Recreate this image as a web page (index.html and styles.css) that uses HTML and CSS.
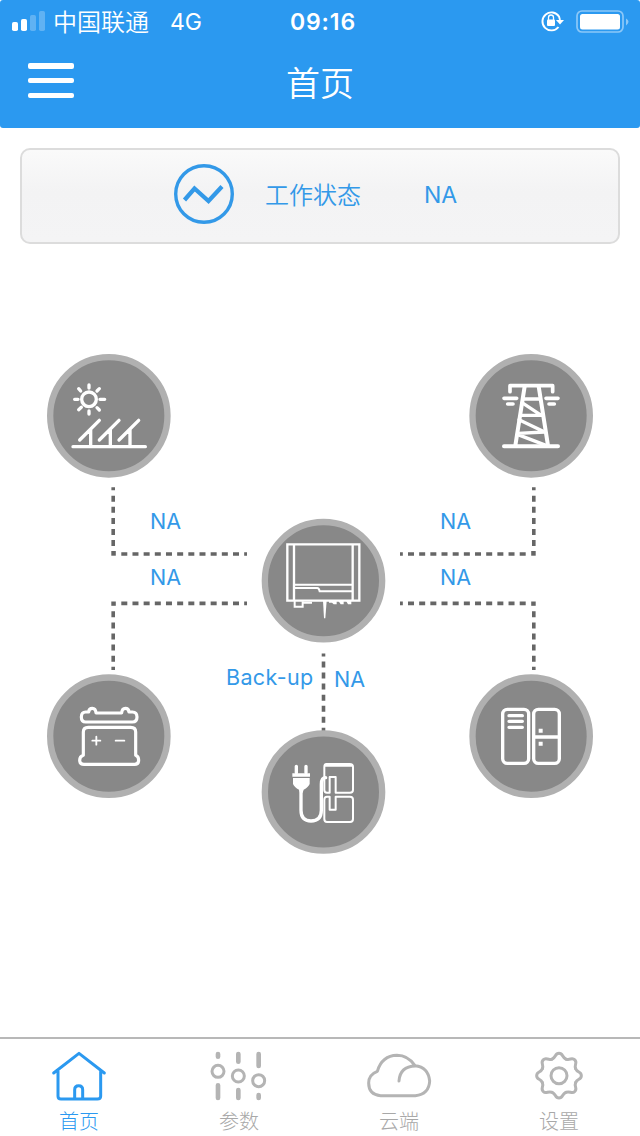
FILE: index.html
```html
<!DOCTYPE html>
<html lang="zh-CN">
<head>
<meta charset="utf-8">
<title>首页</title>
<link rel="stylesheet" href="styles.css">
</head>
<body>
<div class="app">
  <header class="header">
    <div class="statusbar">
      <div class="carrier">
        <svg class="signal" width="34" height="22" viewBox="0 0 34 22"><g fill="#fff"><rect x="0" y="12" width="6" height="9" rx="1.8"/><rect x="9" y="9" width="6" height="12" rx="1.8"/><g opacity=".25"><rect x="18" y="5" width="6" height="16" rx="1.8"/><rect x="27" y="1" width="6" height="20" rx="1.8"/></g></g></svg>
        <span class="carrier-name">中国联通</span><span class="network">4G</span>
      </div>
      <span class="clock">09:16</span>
      <div class="indicators">
        <svg class="lock" width="24" height="22" viewBox="0 0 24 22"><path d="M18.500 17A9 9 0 1 1 19 6.500L20 10" fill="none" stroke="#fff" stroke-width="1.900"/><path d="M16 10h8l-4 4.500z" fill="#fff"/><rect x="7" y="9.500" width="8" height="6.500" rx="1" fill="#fff"/><path d="M8.500 10V7.500a2.500 2.500 0 0 1 5 0V10" fill="none" stroke="#fff" stroke-width="1.300"/></svg>
        <svg class="power" width="54" height="24" viewBox="0 0 54 24"><rect x="1" y="1" width="46" height="21" rx="5" fill="none" stroke="#8cc8f8" stroke-width="1.700"/><rect x="4" y="4" width="40" height="15.500" rx="2.500" fill="#fff"/><path d="M50 8.500q5 3 0 7z" fill="#8cc8f8"/></svg>
      </div>
    </div>
    <div class="navbar">
      <div class="menu"><i></i><i></i><i></i></div>
      <h1 class="title">首页</h1>
    </div>
  </header>

  <section class="status-card">
    <svg width="60" height="60" viewBox="0 0 60 60" fill="none" stroke="#3399e8"><circle cx="30" cy="30" r="28.300" stroke-width="3.400"/><path d="M10.500 36 20.500 24.500 34.500 37 48 22.500" stroke-width="4.200"/></svg>
    <span class="status-label">工作状态</span>
    <span class="status-value">NA</span>
  </section>

  <main class="canvas">
    <svg class="wires" width="640" height="793" viewBox="0 244 640 793" fill="none" stroke="#666" stroke-width="3.600">
      <g id="wire-pair">
        <path d="M113.200 487.300v3M113.200 495.700V550" stroke-dasharray="6 5.100"/>
        <path d="M111.300 551h4.500v4.700h-4.500z" fill="#666" stroke="none"/>
        <path d="M121.300 554H247M121.300 603.400H247" stroke-dasharray="6 5.170"/>
        <path d="M111.300 601.500h4.500v4.300h-4.500z" fill="#666" stroke="none"/>
        <path d="M113.200 611.300V670" stroke-dasharray="6 5.100"/>
      </g>
      <use href="#wire-pair" transform="matrix(-1 0 0 1 647 0)"/>
      <path d="M323.500 653.500v3M323.500 661.500V732" stroke-dasharray="6 5.050"/>
    </svg>

    <span class="reading pv">NA</span>
    <span class="reading grid">NA</span>
    <span class="reading battery">NA</span>
    <span class="reading load">NA</span>
    <span class="reading backup-name">Back-up</span>
    <span class="reading backup">NA</span>

    <svg class="node node-pv" viewBox="0 0 420 420">
      <circle class="disc" cx="206.500" cy="212.500" r="176"/>
      <g class="line" stroke-width="10">
        <circle cx="147" cy="163" r="22"/>
        <path d="M147 120v9M147 198v9M104 163h10M180 163h14M116 131l6 7M178 131l-7 7M116 194l8-7M178 195l-7-7"/>
        <path d="M99 305h217M119 285l59-59M178 285l59-59M237 285l59-59M152 254v50M211 254v50M270 254v50"/>
      </g>
    </svg>

    <svg class="node node-grid" viewBox="0 0 420 420">
      <circle class="disc" cx="213.500" cy="212.500" r="176"/>
      <g class="line" stroke-width="11">
        <path d="M150 140v-18h128v18M132 160h38M258 160h36M143 177h16M267 177h16"/>
        <path d="M194 124 166 302M236 124l28 178M132 304h162" stroke-width="12"/>
        <path d="M191 162h49M186 173l58 38M182 211h64M177 224l77 37M174 265l80-4M172 268l86 33" stroke-width="10"/>
      </g>
    </svg>

    <svg class="node node-inverter" viewBox="0 0 420 420">
      <circle class="disc" cx="220.500" cy="212" r="176"/>
      <g class="line square" stroke-width="7">
        <path d="M112 103h216v169H112zM132 103v169M308 103v169"/>
        <path d="M134 224h174M134 234h68q5 0 7 10h99" stroke-width="6"/>
        <path d="M134 272v18h24v-16M160 278h26" stroke-width="6"/>
        <path d="M237 272h23v11h-9l-5-5h-9zM265 272h16v11h-9zM288 272h16v11h-10z" fill="#fff" stroke="none"/>
        <path d="M219 272h11l-4 53h-4z" fill="#fff" stroke="none"/>
      </g>
    </svg>

    <svg class="node node-battery" viewBox="0 0 420 420">
      <circle class="disc" cx="206.500" cy="213.500" r="176"/>
      <g class="line" stroke-width="9.500">
        <path d="M137 171q-13 0-13-15t13-15h9q1-11 11-11t11 14h77q1-14 11-14t11 11h10q14 0 14 15t-14 15z"/>
        <path d="M130 271V201q0-14 15-14h127q15 0 15 14v70q9 3 9 15 0 12-12 12H132q-13 0-13-12 0-12 11-15z"/>
        <path d="M157 227h24M169 215v24M227 227h26" stroke-width="5.500"/>
      </g>
    </svg>

    <svg class="node node-load" viewBox="0 0 420 420">
      <circle class="disc" cx="213.500" cy="213.500" r="176"/>
      <g class="line" stroke-width="10">
        <rect x="128" y="133" width="78" height="162" rx="14"/><rect x="221" y="133" width="77" height="162" rx="14"/>
        <path d="M222 216h75M147 152h40M147 169h40M147 187h40"/>
        <path d="M236 191h12v12h-12zM236 230h12v12h-12z" fill="#fff" stroke="none"/>
      </g>
    </svg>

    <svg class="node node-backup" viewBox="0 0 420 420">
      <circle class="disc" cx="220.500" cy="213" r="176"/>
      <g class="line">
        <path d="M139 136v19M168 136v19" stroke-width="10"/>
        <path d="M127 157h53v10h-53zM129 171h50v18q-4 10-18 17l-3 9h-8l-3-9q-14-7-18-17z" fill="#fff" stroke="none"/>
        <path d="M153 205v63q0 32 30 32 31 0 31-32v-78q0-20 13-20" stroke-width="10"/>
        <path d="M229 129h70q10 0 10 9v69q0 8-9 8h-43v-47h-18v47h-8q-8 0-8-8v-69q0-9 6-9zM257 227h43q9 0 9 9v58q0 9-9 9h-69q-8 0-8-9v-58q0-9 8-9h8v39h18zM225 134h82" stroke-width="6"/>
      </g>
    </svg>
  </main>

  <nav class="tabbar">
    <a class="tab active">
      <svg width="60" height="54" viewBox="0 0 180 162"><path d="M14 92 90 33l76 59M27 87v75q0 8 9 8h109q10 0 10-8V87" transform="translate(0 -14)"/><path d="M77 154v-26q0-12 12-12t12 12v26"/></svg>
      <span>首页</span>
    </a>
    <a class="tab">
      <svg width="60" height="54" viewBox="0 0 180 162"><path d="M27 21v8M27 115v38M88 21v23M88 129v24M149 21v36M149 144v9" stroke-width="14"/><g stroke-width="9"><circle cx="27" cy="73" r="18"/><circle cx="88" cy="87" r="18"/><circle cx="149" cy="101" r="18"/></g></svg>
      <span>参数</span>
    </a>
    <a class="tab">
      <svg width="70" height="54" viewBox="0 0 210 162"><path d="M50 146q-36-3-36-38 0-25 26-35 14-47 59-48 33 0 54 31 40 4 44 46-2 40-43 44zM154 57q-46 1-49 45"/></svg>
      <span>云端</span>
    </a>
    <a class="tab">
      <svg width="60" height="54" viewBox="0 0 180 162"><g transform="translate(90 86)"><circle r="24"/><g id="gear-half"><g id="gear-quarter"><path id="tooth" d="M-20.700-49.900C-8-55-13-67 0-67S8-55 20.700-49.900"/><use href="#tooth" transform="rotate(45)"/></g><use href="#gear-quarter" transform="rotate(90)"/></g><use href="#gear-half" transform="rotate(180)"/></g></svg>
      <span>设置</span>
    </a>
  </nav>
</div>
</body>
</html>
```
FILE: styles.css
```css
* { box-sizing: border-box; }
body { margin: 0; background: #fff; font-family: Inter, "Noto Sans CJK SC", sans-serif; }
.app { width: 640px; height: 1136px; display: flex; flex-direction: column; overflow: hidden; background: #fff; }

.header { height: 128px; flex: none; background: #2b99f0; color: #fff; border-radius: 3px; }
.statusbar { height: 40px; display: grid; grid-template-columns: 1fr 70px 1fr; align-items: center; padding: 0 10px 0 12px; }
.carrier { display: flex; align-items: center; font-size: 24px; line-height: 40px; }
.signal { margin-top: -1px; }
.carrier-name { margin: -1px 0 0 7px; font-weight: 350; font-family: "Noto Sans CJK SC DemiLight", "Noto Sans CJK SC", sans-serif; }
.network { margin: 2px 0 0 21px; font-size: 23px; }
.clock { margin: 2px -4px 0 0; font-size: 23px; font-weight: 600; letter-spacing: .9px; text-align: center; }
.indicators { display: flex; justify-content: flex-end; align-items: center; gap: 11px; }
.lock { margin-right: 1px; }
.power { margin-top: 2px; }
.navbar { height: 88px; display: grid; grid-template-columns: 100px 1fr 100px; align-items: center; }
.menu { width: 46px; height: 35px; margin: -7px 0 0 27.500px; display: flex; flex-direction: column; justify-content: space-between; }
.menu i { height: 5.500px; background: #fff; border-radius: 2px; }
.title { margin: -4px 0 0; text-align: center; font: 350 34px/50px "Noto Sans CJK SC DemiLight", "Noto Sans CJK SC", sans-serif; }

.status-card { height: 96px; flex: none; margin: 20px 20px 0; padding: 0 0 4px 152px; display: flex; align-items: center; border: 2px solid #dcdcdc; border-radius: 10px; background: linear-gradient(#fafafa, #f3f3f4 45%, #f4f4f5); color: #3399e8; font-size: 24px; }
.status-label { margin: -2px 0 0 31px; font-weight: 350; font-family: "Noto Sans CJK SC DemiLight", "Noto Sans CJK SC", sans-serif; }
.status-value { margin: 2px 0 0 63px; font-size: 23px; }

.canvas { position: relative; height: 793px; flex: none; }
.wires { display: block; }
.reading { position: absolute; color: #3399e8; font-size: 21.500px; line-height: 26px; white-space: nowrap; }
.pv { left: 150px; top: 264px; }
.battery { left: 150px; top: 320px; }
.grid { left: 440px; top: 264px; }
.load { left: 440px; top: 320px; }
.backup-name { left: 226px; top: 420px; letter-spacing: .35px; }
.backup { left: 334px; top: 422px; }
.node { position: absolute; width: 140px; height: 140px; }
.node-pv { left: 40px; top: 101px; }
.node-grid { left: 460px; top: 101px; }
.node-inverter { left: 250px; top: 266px; }
.node-battery { left: 40px; top: 421px; }
.node-load { left: 460px; top: 421px; }
.node-backup { left: 250px; top: 477px; }
.disc { fill: #888; stroke: #b0b0b0; stroke-width: 19; }
.line { fill: none; stroke: #fff; stroke-linecap: round; stroke-linejoin: round; }
.square { stroke-linecap: butt; stroke-linejoin: miter; }

.tabbar { height: 99px; flex: none; display: grid; grid-template-columns: repeat(4, 160px); margin-left: -1px; border-top: 2px solid #b8b8b8; }
.tab { display: flex; flex-direction: column; align-items: center; padding-top: 8px; color: #a8a8a8; font: 300 20px/28px "Noto Sans CJK SC", sans-serif; }
.tab svg { fill: none; stroke: #b4b4b4; stroke-width: 9; stroke-linejoin: round; stroke-linecap: round; }
.tab span { margin-top: 6px; }
.active { color: #2b99f0; }
.active svg { stroke: #2b99f0; }
```
